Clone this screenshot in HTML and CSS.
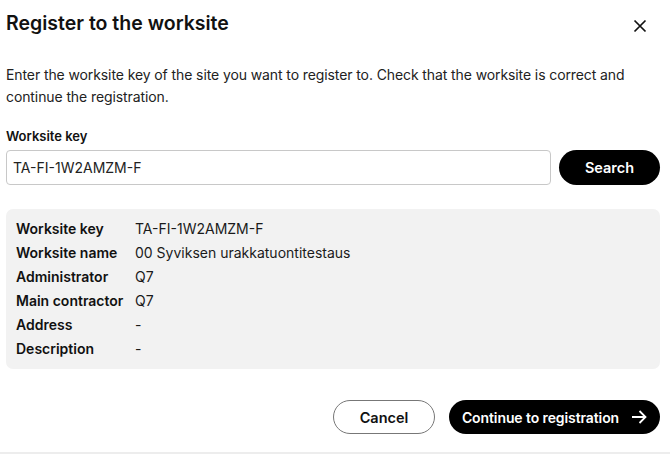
FILE: index.html
```html
<!DOCTYPE html>
<html lang="en">
<head>
    <meta charset="UTF-8">
    <meta name="viewport" content="width=device-width, initial-scale=1.0">
    <title>Register to the worksite</title>
    <link rel="stylesheet" href="styles.css">
</head>
<body>
    <div class="register-modal">
        <div class="modal-header">
            <h1>Register to the worksite</h1>
            <span class="close-btn">
                <svg width="14" height="14" viewBox="0 0 14 14"><path d="M1.5 1.5 L12.5 12.5 M12.5 1.5 L1.5 12.5" stroke="#111" stroke-width="1.7" fill="none"/></svg>
            </span>
        </div>

        <p class="intro">Enter the worksite key of the site you want to register to. Check that the worksite is correct and continue the registration.</p>

        <label class="field-label" for="worksite-key">Worksite key</label>
        <div class="search-row">
            <input type="text" id="worksite-key" value="TA-FI-1W2AMZM-F">
            <button class="button-dark button-search">Search</button>
        </div>

        <div class="worksite-info">
            <div class="info-row"><span class="info-label">Worksite key</span><span>TA-FI-1W2AMZM-F</span></div>
            <div class="info-row"><span class="info-label">Worksite name</span><span>00 Syviksen urakkatuontitestaus</span></div>
            <div class="info-row"><span class="info-label">Administrator</span><span>Q7</span></div>
            <div class="info-row"><span class="info-label">Main contractor</span><span>Q7</span></div>
            <div class="info-row"><span class="info-label">Address</span><span>-</span></div>
            <div class="info-row"><span class="info-label">Description</span><span>-</span></div>
        </div>

        <div class="modal-actions">
            <button class="button-cancel">Cancel</button>
            <button class="button-dark button-continue">Continue to registration
                <svg width="16" height="14" viewBox="0 0 16 14"><path d="M1 7 H14.5 M8.5 1 L14.5 7 L8.5 13" stroke="#fff" stroke-width="1.8" fill="none"/></svg>
            </button>
        </div>
    </div>
</body>
</html>
```

FILE: styles.css
```css
body, html {
    margin: 0;
    padding: 0;
    background: #fff;
    font-family: 'Inter', 'Liberation Sans', sans-serif;
    color: #1a1a1a;
}

.register-modal {
    padding: 10px 10px 0 6px;
    height: 454px;
    box-sizing: border-box;
    border-bottom: 2px solid #ededed;
}

.modal-header {
    display: flex;
    justify-content: space-between;
    align-items: flex-start;
}

.modal-header h1 {
    margin: 0;
    font-size: 19.5px;
    font-weight: 600;
    line-height: 26px;
    color: #111;
}

.close-btn {
    display: flex;
    margin: 9px 13px 0 0;
}

.intro {
    margin: 28px 0 0;
    font-size: 14px;
    letter-spacing: -0.1px;
    line-height: 22px;
    color: #222;
}

.field-label {
    display: block;
    margin-top: 19px;
    font-size: 13px;
    font-weight: 600;
    line-height: 18px;
    color: #111;
}

.search-row {
    display: flex;
    gap: 8px;
    margin-top: 5px;
}

.search-row input {
    flex: 1;
    height: 35px;
    box-sizing: border-box;
    border: 1px solid #c8c8c8;
    border-radius: 4px;
    padding: 0 6px;
    font-family: inherit;
    font-size: 14px;
    color: #222;
}

.button-dark {
    background: #000;
    color: #fff;
    border: none;
    border-radius: 18px;
    font-family: inherit;
    font-weight: 600;
    font-size: 14.5px;
    cursor: pointer;
}

.button-search {
    width: 101px;
    height: 35px;
}

.worksite-info {
    margin-top: 24px;
    background: #f2f2f2;
    border-radius: 7px;
    padding: 8px 10px;
    height: 160px;
    box-sizing: border-box;
}

.info-row {
    display: flex;
    font-size: 14px;
    line-height: 24px;
    color: #1a1a1a;
}

.info-label {
    width: 119px;
    font-weight: 600;
    color: #111;
}

.modal-actions {
    display: flex;
    justify-content: flex-end;
    gap: 14px;
    margin-top: 31px;
}

.button-cancel {
    width: 102px;
    height: 34px;
    background: #fff;
    border: 1px solid #777;
    border-radius: 18px;
    font-family: inherit;
    font-weight: 600;
    font-size: 14.5px;
    color: #111;
    cursor: pointer;
}

.button-continue {
    width: 211px;
    height: 34px;
    display: flex;
    align-items: center;
    justify-content: center;
    gap: 12px;
    font-size: 14px;
    letter-spacing: -0.1px;
}
```
